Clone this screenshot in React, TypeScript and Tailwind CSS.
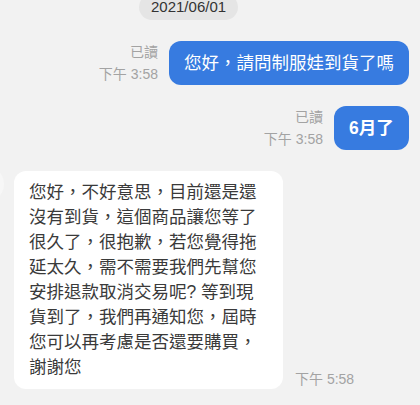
const font = '[font-family:"Liberation_Sans","Noto_Sans_CJK_TC",sans-serif]';

const replyLines = [
  "您好，不好意思，目前還是還",
  "沒有到貨，這個商品讓您等了",
  "很久了，很抱歉，若您覺得拖",
  "延太久，需不需要我們先幫您",
  "安排退款取消交易呢? 等到現",
  "貨到了，我們再通知您，屆時",
  "您可以再考慮是否還要購買，",
  "謝謝您",
];

function ReadMeta({ time }: { time: string }) {
  return (
    <div className="text-right text-[14px] leading-[22px] text-[#a3a3a3]">
      <div>已讀</div>
      <div>{time}</div>
    </div>
  );
}

export default function App() {
  return (
    <div className={`w-[420px] h-[405px] overflow-hidden bg-[#f2f2f2] pr-[11px] ${font}`}>
      {/* date pill */}
      <div className="flex">
        <div className="ml-[139px] -mt-[6px] h-[26px] px-[12px] rounded-full bg-[#e5e5e5] flex items-center text-[15px] text-[#333]">
          2021/06/01
        </div>
      </div>

      {/* my messages */}
      <div className="mt-[21px] flex justify-end items-center gap-[11px]">
        <ReadMeta time="下午 3:58" />
        <div className="rounded-[12px] bg-[#377be0] px-[15px] py-[10px] text-[17.5px] leading-[24px] text-white">
          您好，請問制服娃到貨了嗎
        </div>
      </div>

      <div className="mt-[21px] flex justify-end items-center gap-[11px]">
        <ReadMeta time="下午 3:58" />
        <div className="w-[75px] rounded-[12px] bg-[#377be0] px-[15px] py-[10px] text-[17.5px] leading-[24px] font-semibold text-white">
          6月了
        </div>
      </div>

      {/* seller reply */}
      <div className="mt-[21px] flex items-end">
        <div className="w-9 h-9 -ml-8 self-start -mt-[5px] rounded-full bg-[#f7f7f7] shrink-0" />
        <div className="ml-[10px] w-[269px] rounded-[12px] bg-white px-[15px] py-[9px] text-[17.5px] leading-[25px] text-[#3a3a3a]">
          {replyLines.map((line) => (
            <div key={line} className="whitespace-nowrap">{line}</div>
          ))}
        </div>
        <div className="ml-[12px] -mb-[2px] text-[14px] leading-[23px] text-[#a3a3a3]">下午 5:58</div>
      </div>
    </div>
  );
}
